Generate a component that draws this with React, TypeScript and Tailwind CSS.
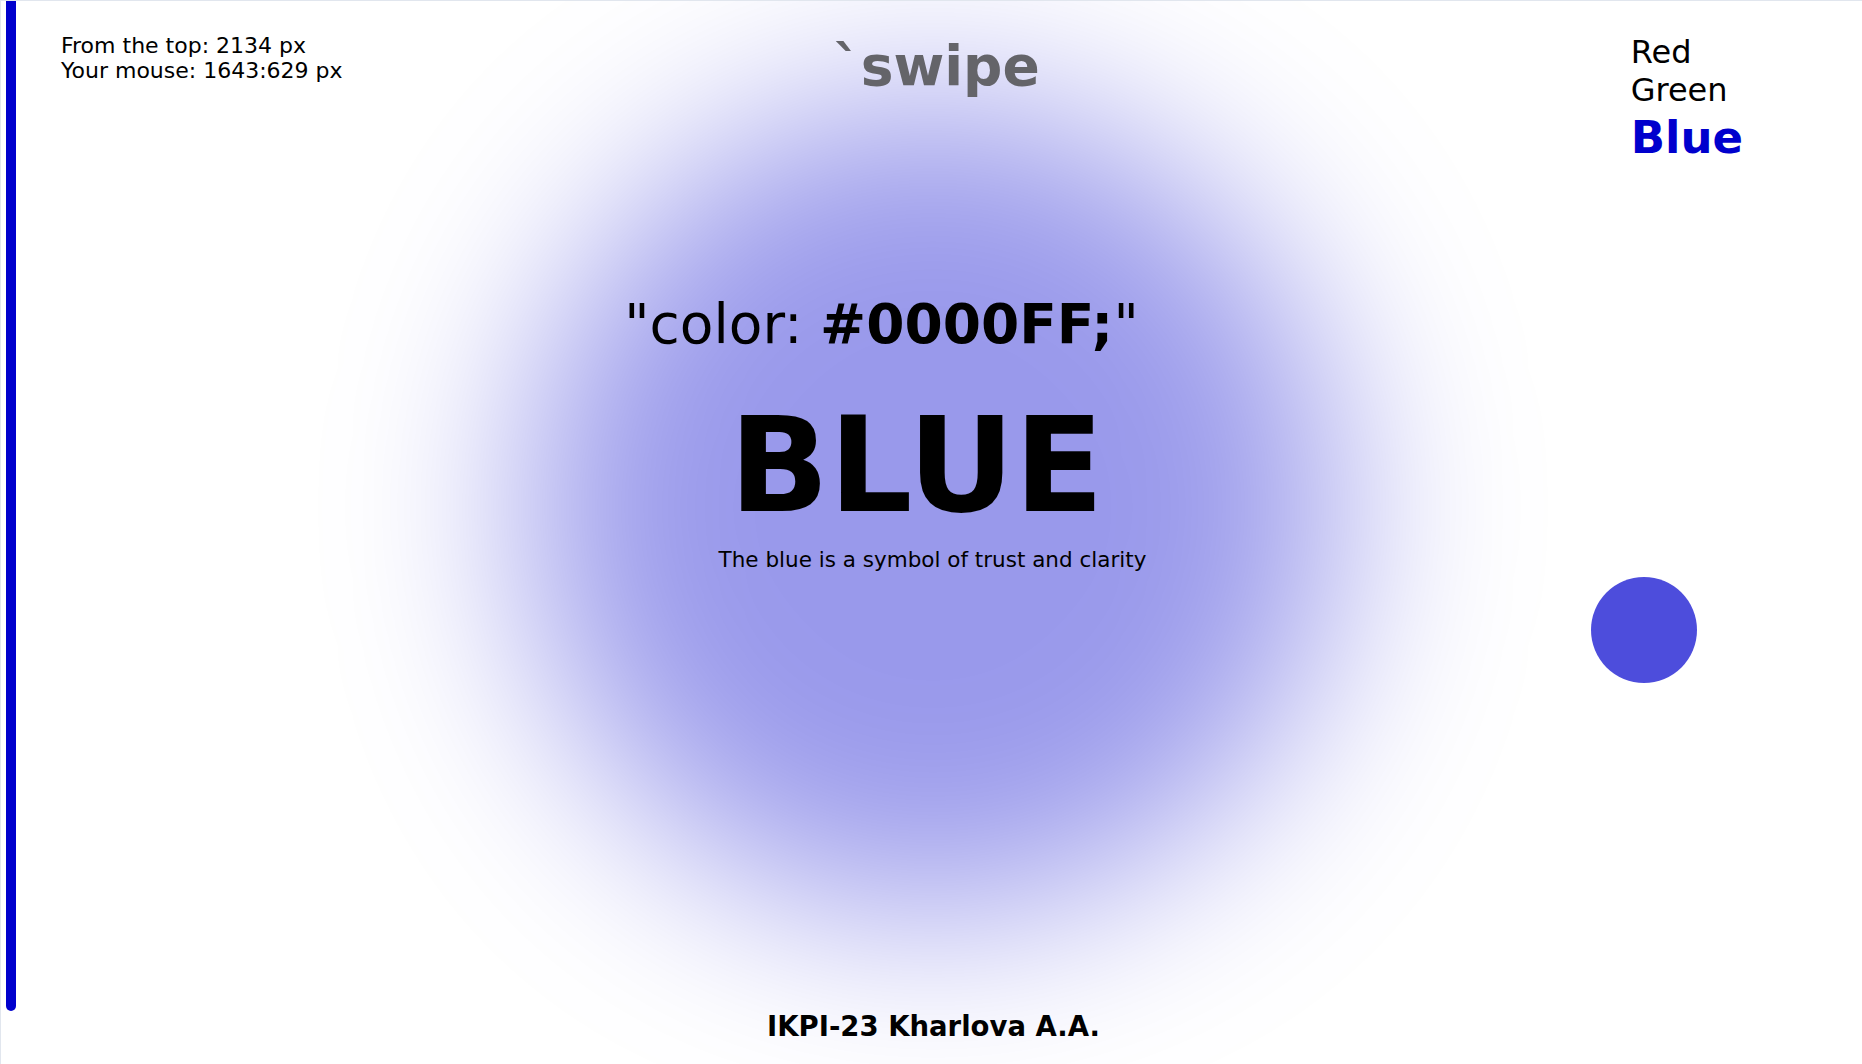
import React from "react";

export default function App() {
  return (
    <div className="relative w-full h-[1064px] overflow-hidden bg-white border-t border-l border-[#e1e6ee] font-['DejaVu_Sans',sans-serif] text-black">
      {/* glow blob behind content */}
      <div className="absolute left-[527px] top-[101px] w-[810px] h-[810px] rounded-full bg-[#0000cd]/40 blur-[96px]" />
      {/* scroll progress bar */}
      <div className="absolute left-[5px] top-0 w-[10px] h-[1010px] bg-[#0000cd] rounded-b-full" />
      {/* cursor follower */}
      <div className="absolute left-[1590px] top-[576px] w-[106px] h-[106px] rounded-full bg-[#4d4ddc]" />

      <div className="relative flex flex-col h-full">
        <header className="grid grid-cols-3 items-start pt-[32px]">
          <div className="pl-[60px] text-[22px] leading-[25px] whitespace-nowrap">
            <div>From the top: 2134 px</div>
            <div>Your mouse: 1643:629 px</div>
          </div>
          <div className="justify-self-center mt-[1px] pl-[10px] text-[55px] leading-[64px] font-bold text-[#646469] whitespace-nowrap">
            `swipe
          </div>
          <nav className="pl-[389px] flex flex-col items-start whitespace-nowrap">
            <span className="text-[32px] leading-[39px]">Red</span>
            <span className="text-[32px] leading-[36px]">Green</span>
            <span className="text-[45px] leading-[52px] font-bold text-[#0000cd] mt-[4px]">Blue</span>
          </nav>
        </header>

        <main className="flex-1 flex flex-col items-center">
          <div className="mt-[128px] pr-[100px] text-[55px] leading-[64px] whitespace-nowrap">
            "color: <span className="font-bold">#0000FF;</span>"
          </div>
          <div className="mt-[40px] pr-[30px] text-[131px] leading-[140px] font-bold">
            BLUE
          </div>
          <div className="mt-[11px] pl-[2px] text-[21.5px] leading-[26px]">
            The blue is a symbol of trust and clarity
          </div>
        </main>

        <footer className="flex justify-center pb-[18px] pl-[4px]">
          <span className="text-[27.5px] leading-[40px] font-bold">IKPI-23 Kharlova A.A.</span>
        </footer>
      </div>
    </div>
  );
}
